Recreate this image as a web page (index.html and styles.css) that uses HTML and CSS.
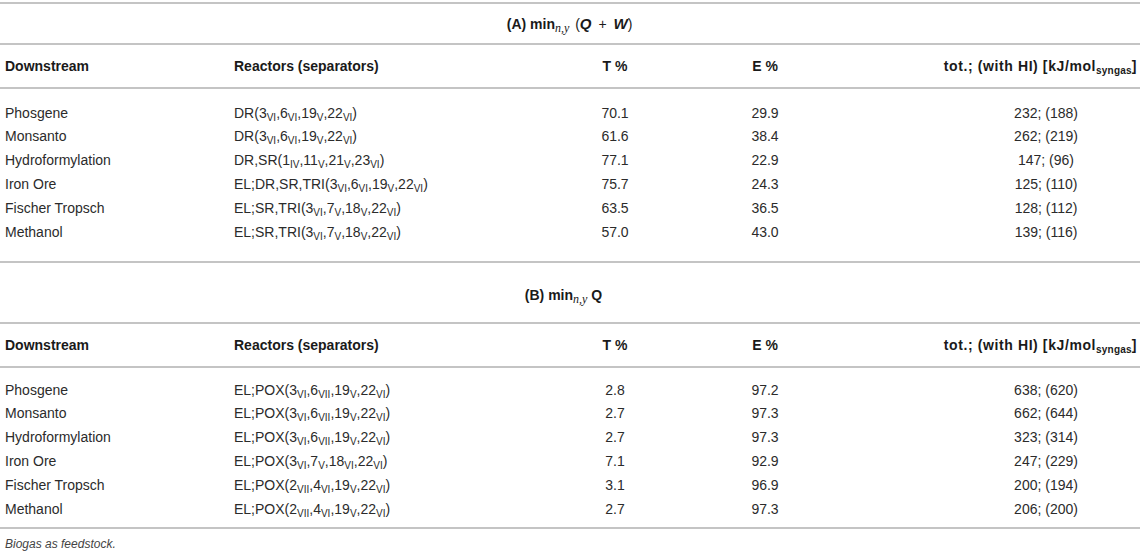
FILE: index.html
```html
<!doctype html>
<html lang="en">
<head>
  <meta charset="utf-8" />
  <meta name="viewport" content="width=device-width,initial-scale=1" />
  <title>Table — Biogas as feedstock</title>
  <link rel="stylesheet" href="styles.css">
</head>
<body>
  <div class="table-wrap">
    <table class="data">
      <colgroup>
        <col class="c-down">
        <col class="c-reac">
        <col class="c-t">
        <col class="c-e">
        <col class="c-tot">
      </colgroup>
      <tbody>
        <tr class="section first">
          <td colspan="5">(A) min<sub class="m">n,y</sub> <span class="math">(<b>Q</b> + <b>W</b>)</span></td>
        </tr>
        <tr class="head">
          <th>Downstream</th>
          <th>Reactors (separators)</th>
          <th class="num">T %</th>
          <th class="num">E %</th>
          <th class="tot">tot.; (with HI) [kJ/mol<sub>syngas</sub>]</th>
        </tr>
        <tr class="top">
          <td>Phosgene</td>
          <td>DR(3<sub>VI</sub>,6<sub>VI</sub>,19<sub>V</sub>,22<sub>VI</sub>)</td>
          <td class="num">70.1</td><td class="num">29.9</td><td class="totv">232; (188)</td>
        </tr>
        <tr>
          <td>Monsanto</td>
          <td>DR(3<sub>VI</sub>,6<sub>VI</sub>,19<sub>V</sub>,22<sub>VI</sub>)</td>
          <td class="num">61.6</td><td class="num">38.4</td><td class="totv">262; (219)</td>
        </tr>
        <tr>
          <td>Hydroformylation</td>
          <td>DR,SR(1<sub>IV</sub>,11<sub>V</sub>,21<sub>V</sub>,23<sub>VI</sub>)</td>
          <td class="num">77.1</td><td class="num">22.9</td><td class="totv">147; (96)</td>
        </tr>
        <tr>
          <td>Iron Ore</td>
          <td>EL;DR,SR,TRI(3<sub>VI</sub>,6<sub>VI</sub>,19<sub>V</sub>,22<sub>VI</sub>)</td>
          <td class="num">75.7</td><td class="num">24.3</td><td class="totv">125; (110)</td>
        </tr>
        <tr>
          <td>Fischer Tropsch</td>
          <td>EL;SR,TRI(3<sub>VI</sub>,7<sub>V</sub>,18<sub>V</sub>,22<sub>VI</sub>)</td>
          <td class="num">63.5</td><td class="num">36.5</td><td class="totv">128; (112)</td>
        </tr>
        <tr class="last a-last">
          <td>Methanol</td>
          <td>EL;SR,TRI(3<sub>VI</sub>,7<sub>V</sub>,18<sub>V</sub>,22<sub>VI</sub>)</td>
          <td class="num">57.0</td><td class="num">43.0</td><td class="totv">139; (116)</td>
        </tr>

        <tr class="section second">
          <td colspan="5">(B) min<sub class="m">n,y</sub> <b>Q</b></td>
        </tr>
        <tr class="head">
          <th>Downstream</th>
          <th>Reactors (separators)</th>
          <th class="num">T %</th>
          <th class="num">E %</th>
          <th class="tot">tot.; (with HI) [kJ/mol<sub>syngas</sub>]</th>
        </tr>
        <tr class="top b-top">
          <td>Phosgene</td>
          <td>EL;POX(3<sub>VI</sub>,6<sub>VII</sub>,19<sub>V</sub>,22<sub>VI</sub>)</td>
          <td class="num">2.8</td><td class="num">97.2</td><td class="totv">638; (620)</td>
        </tr>
        <tr>
          <td>Monsanto</td>
          <td>EL;POX(3<sub>VI</sub>,6<sub>VII</sub>,19<sub>V</sub>,22<sub>VI</sub>)</td>
          <td class="num">2.7</td><td class="num">97.3</td><td class="totv">662; (644)</td>
        </tr>
        <tr>
          <td>Hydroformylation</td>
          <td>EL;POX(3<sub>VI</sub>,6<sub>VII</sub>,19<sub>V</sub>,22<sub>VI</sub>)</td>
          <td class="num">2.7</td><td class="num">97.3</td><td class="totv">323; (314)</td>
        </tr>
        <tr>
          <td>Iron Ore</td>
          <td>EL;POX(3<sub>VI</sub>,7<sub>V</sub>,18<sub>VI</sub>,22<sub>VI</sub>)</td>
          <td class="num">7.1</td><td class="num">92.9</td><td class="totv">247; (229)</td>
        </tr>
        <tr>
          <td>Fischer Tropsch</td>
          <td>EL;POX(2<sub>VII</sub>,4<sub>VI</sub>,19<sub>V</sub>,22<sub>VI</sub>)</td>
          <td class="num">3.1</td><td class="num">96.9</td><td class="totv">200; (194)</td>
        </tr>
        <tr class="last b-last">
          <td>Methanol</td>
          <td>EL;POX(2<sub>VII</sub>,4<sub>VI</sub>,19<sub>V</sub>,22<sub>VI</sub>)</td>
          <td class="num">2.7</td><td class="num">97.3</td><td class="totv">206; (200)</td>
        </tr>
      </tbody>
    </table>
    <p class="note">Biogas as feedstock.</p>
  </div>
</body>
</html>
```

FILE: styles.css
```css
*{box-sizing:border-box}
html,body{height:100%}
body{
  margin:0;
  background:#fff;
  color:#2b2b2b;
  font-family:"Liberation Sans",Arial,Helvetica,sans-serif;
  font-size:14px;
}

.table-wrap{
  width:1142px;
  padding-top:2px;
}

.data{
  width:1140px;
  border-collapse:collapse;
  table-layout:fixed;
  border-top:2px solid #c4c4c4;
}
.c-down{width:230px}
.c-reac{width:310px}
.c-t{width:150px}
.c-e{width:150px}
.c-tot{width:300px}

.data td,.data th{
  padding:0 4px;
  height:24px;
  line-height:16px;
  vertical-align:middle;
  text-align:left;
  white-space:nowrap;
}
.data td:first-child,.data th:first-child{padding-left:5px}

.data sub{
  font-size:10px;
  line-height:0;
  vertical-align:-3px;
}

/* section title rows */
.section td{
  text-align:center;
  font-weight:700;
  color:#1a1a1a;
  border-bottom:2px solid #c4c4c4;
}
.section.first td{height:41px;padding-right:6px}
.section.second td{height:61px;padding-top:4px;padding-right:18px}
.section sub.m{
  font-family:"Liberation Serif","Times New Roman",serif;
  font-style:italic;
  font-weight:400;
  font-size:12px;
}
.math{
  font-weight:400;
  font-size:14px;
  word-spacing:3px;
  margin-left:2px;
}
.math b{font-style:italic;font-weight:700;font-size:15px}

/* header rows */
.head th{
  height:44px;
  font-weight:700;
  color:#1a1a1a;
  border-bottom:2px solid #c4c4c4;
}
.head th.tot{text-align:right;padding-right:3px;letter-spacing:.6px}
.head sub{font-size:10px;letter-spacing:.2px}

.num{text-align:center !important}
.totv{text-align:center !important;padding-left:116px !important}

/* data rows spacing */
.top td{height:36px;padding-top:12px}
.b-top td{height:34px;padding-top:10px}
.last td{border-bottom:2px solid #c4c4c4}
.a-last td{height:42px;padding-bottom:18px}
.b-last td{height:31px;padding-bottom:7px}

.note{
  margin:8px 0 0 5px;
  font-size:12px;
  font-style:italic;
  color:#444;
}
```
